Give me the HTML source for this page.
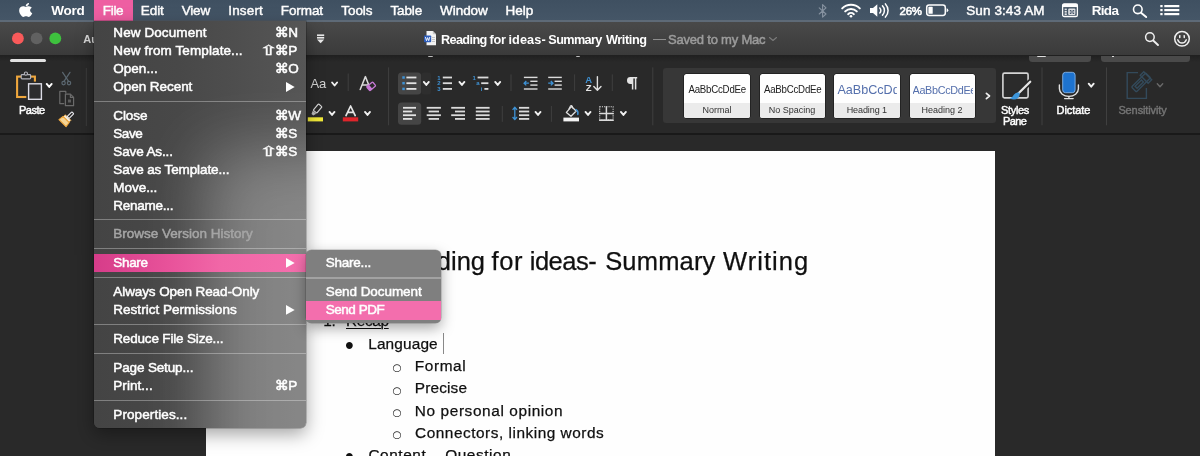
<!DOCTYPE html>
<html lang="en">
<head>
<meta charset="utf-8">
<title>Word - File menu - Share - Send PDF</title>
<style>
html,body{margin:0;padding:0;}
body{width:1200px;height:456px;overflow:hidden;background:#292929;position:relative;font-family:"Liberation Sans","DejaVu Sans",sans-serif;}
.abs,.t,svg{position:absolute;}
.t{white-space:pre;line-height:20px;height:20px;font-family:"Liberation Sans","DejaVu Sans",sans-serif;}
#menubar{left:0;top:0;width:1200px;height:21px;background:linear-gradient(#405162,#465768);}
#mbline{left:0;top:20px;width:1200px;height:1.5px;background:#5f6b78;}
#filehl{left:94px;top:0;width:39px;height:20.5px;background:#ef5fa3;}
#titlebar{left:0;top:21.5px;width:1200px;height:34.2px;background:linear-gradient(#4a4a4a,#3b3b3b);}
#ribbon{left:0;top:55px;width:1200px;height:78px;background:linear-gradient(#202020 0,#2a2a2a 7px,#2a2a2a 100%);}
#ribline{left:0;top:133px;width:1200px;height:1.5px;background:#1a1a1a;}
#page{left:206px;top:150.5px;width:789px;height:306px;background:#fff;}
.vsep{width:1px;background:#4a4a4a;}
.btnbg{background:#3e3e3e;border-radius:4px;}
#gallery{left:662.6px;top:68.3px;width:333.4px;height:54.4px;background:#383838;border-radius:3px;}
.card{top:73.5px;width:65.8px;height:44.3px;background:#fff;border-radius:2.5px;overflow:hidden;box-shadow:0 0 0 0.5px #111;}
.card i{position:absolute;left:0;right:0;top:29px;bottom:0;background:#ececec;}
.card .t{top:5.8px;}
#filemenu{left:94px;top:21px;width:211.6px;height:406.5px;background:linear-gradient(to right,#454545 0%,#494949 40%,#575757 100%);border-radius:0 0 5.5px 5.5px;overflow:hidden;box-shadow:0 6px 18px rgba(0,0,0,0.36),0 0 0 0.5px rgba(0,0,0,0.35);}
#filemenu .glow{left:112px;top:130px;width:400px;height:400px;background:#fff;filter:blur(32px);opacity:0.29;}
.msep{left:94px;width:211.6px;height:1.7px;background:rgba(255,255,255,0.32);}
#sharehl{left:94px;top:253.6px;width:211.6px;height:18.4px;background:linear-gradient(to right,#d73d8a 0%,#e9539b 35%,#f268a8 60%,#f570ae 100%);}
#submenu{left:305.6px;top:250.3px;width:135.1px;height:72.4px;background:#808080;border-radius:5.5px;overflow:hidden;box-shadow:0 5px 14px rgba(0,0,0,0.35),0 0 0 0.5px rgba(0,0,0,0.25);}
#pdfhl{left:305.6px;top:301.3px;width:135.1px;height:18.6px;background:#f46fae;}
.ssep{left:305.6px;top:277.4px;width:135.1px;height:1.5px;background:rgba(255,255,255,0.28);}
</style>
</head>
<body>
<div id="root" style="position:absolute;left:0;top:0;width:1200px;height:456px;overflow:hidden;will-change:transform;opacity:0.999">
<!-- ================= base ================= -->
<div class="abs" id="menubar"></div>
<div class="abs" id="mbline"></div>
<div class="abs" id="filehl"></div>
<div class="abs" id="titlebar"></div>
<div class="abs" id="ribbon"></div>
<div class="abs" id="ribline"></div>
<div class="abs" id="page"></div>

<div class="abs" id="gallery"></div>
<div class="abs card" style="left:684px"><i></i></div>
<div class="abs card" style="left:759.5px"><i></i></div>
<div class="abs card" style="left:834.4px"><i></i><span class="t" style="left:3.10px;top:6.20px;font-size:12.6px;color:#5570ad;letter-spacing:-0.020px;width:59.8px;overflow:hidden;">AaBbCcDdEe</span></div>
<div class="abs card" style="left:909.5px"><i></i><span class="t" style="left:3.00px;top:6.00px;font-size:10.8px;color:#5570ad;letter-spacing:-0.312px;width:60px;overflow:hidden;">AaBbCcDdEe</span></div>
<!-- apple logo -->
<svg style="left:19.2px;top:1.6px" width="13.4" height="15.9" viewBox="0 0 384 512" preserveAspectRatio="none"><path fill="#fff" d="M318.700 268.700c-.2-36.700 16.400-64.400 50-84.800-18.800-26.900-47.200-41.700-84.700-44.600-35.500-2.800-74.300 20.700-88.500 20.700-15 0-49.400-19.700-76.400-19.700C63.300 141.200 4 184.800 4 273.500q0 39.300 14.400 81.200c12.800 36.700 59 126.700 107.200 125.200 25.200-.6 43-17.900 75.800-17.900 31.800 0 48.300 17.900 76.400 17.900 48.600-.7 90.400-82.500 102.600-119.300-65.200-30.700-61.700-90-61.700-91.900zm-56.600-164.200c27.300-32.400 24.800-61.900 24-72.500-24.100 1.400-52 16.400-67.900 34.900-17.500 19.800-27.800 44.300-25.600 71.900 26.100 2 49.900-11.400 69.500-34.300z"/></svg>

<!-- menubar right icons -->
<svg style="left:816px;top:2px" width="14" height="18" viewBox="0 0 14 18"><path d="M3.2 5.800 L10 12 L6.600 15.200 L6.600 2.600 L10 5.800 L3.200 12" fill="none" stroke="#8793a1" stroke-width="1.100" stroke-linejoin="round" stroke-linecap="round"/></svg>
<svg style="left:840px;top:2px" width="22" height="17" viewBox="0 0 22 17"><g fill="none" stroke="#fff" stroke-linecap="round"><path d="M2.200 6.400 A12.500 12.500 0 0 1 19.800 6.400" stroke-width="2"/><path d="M5.200 9.400 A8.300 8.300 0 0 1 16.800 9.400" stroke-width="2"/><path d="M8.100 12.200 A4.200 4.200 0 0 1 13.900 12.200" stroke-width="1.900"/></g><circle cx="11" cy="14.300" r="1.300" fill="#fff"/></svg>
<svg style="left:868px;top:2px" width="24" height="17" viewBox="0 0 24 17"><path d="M2 6.100 H5 L9.300 2.300 V14.700 L5 10.900 H2 Z" fill="#fff"/><g fill="none" stroke="#fff" stroke-width="1.500" stroke-linecap="round"><path d="M11.800 6 A3.500 3.500 0 0 1 11.800 11"/><path d="M14.500 3.900 A6.500 6.500 0 0 1 14.500 13.100"/><path d="M17.400 1.900 A9.500 9.500 0 0 1 17.400 15.100"/></g></svg>
<svg style="left:925px;top:3px" width="26" height="15" viewBox="0 0 26 15"><rect x="1.700" y="2.100" width="18.600" height="10.400" rx="2.400" fill="none" stroke="#fff" stroke-width="1.500"/><rect x="3.400" y="3.800" width="4.300" height="7" rx="0.600" fill="#fff"/><path d="M21.600 5.300 q1.700 0.300 1.700 2 t-1.700 2 Z" fill="#fff"/></svg>
<svg style="left:1061px;top:2px" width="18" height="17" viewBox="0 0 18 17"><rect x="1.600" y="1.900" width="14.800" height="12.600" rx="1.600" fill="none" stroke="#fff" stroke-width="1.300"/><rect x="1.600" y="1.900" width="14.800" height="3.200" fill="#fff"/><g fill="#fff" opacity="0.850"><rect x="3.600" y="6.600" width="2.200" height="1.600"/><rect x="3.600" y="9" width="2.200" height="1.600"/><rect x="3.600" y="11.400" width="2.200" height="1.600"/><rect x="7.200" y="6.600" width="7.200" height="6.400" rx="1"/></g><path d="M8.800 8 h1.600 v1.400 h1.200 v-1.400 h1.600 v1.600 h-1.400 v0.800 h1.400 v1.600 h-1.600 v-1.400 h-1.200 v1.400 h-1.600 v-1.600 h1.400 v-0.800 h-1.400 Z" fill="#46576b"/></svg>
<svg style="left:1131px;top:3px" width="18" height="16" viewBox="0 0 18 16"><circle cx="6.800" cy="6.300" r="4.300" fill="none" stroke="#fff" stroke-width="1.600"/><path d="M10 9.700 L15.200 14.100" stroke="#fff" stroke-width="1.900" stroke-linecap="round"/></svg>
<svg style="left:1159px;top:3px" width="22" height="14" viewBox="0 0 22 14"><g fill="#fff"><rect x="1.300" y="2" width="2.300" height="2.200"/><rect x="5.300" y="2" width="15" height="2.200"/><rect x="1.300" y="6" width="2.300" height="2.200"/><rect x="5.300" y="6" width="15" height="2.200"/><rect x="1.300" y="10" width="2.300" height="2.200"/><rect x="5.300" y="10" width="15" height="2.200"/></g></svg>

<!-- traffic lights -->
<svg style="left:10px;top:30px" width="56" height="17" viewBox="0 0 56 17"><circle cx="7.900" cy="8.400" r="5.900" fill="#fa5b5b"/><circle cx="26.600" cy="8.400" r="5.900" fill="#626262"/><circle cx="45.300" cy="8.400" r="5.900" fill="#3fc23f"/></svg>

<!-- quick access overflow -->
<svg style="left:315px;top:32px" width="11" height="13" viewBox="0 0 11 13"><rect x="2" y="2.400" width="7.200" height="1.700" fill="#ececec"/><rect x="2" y="5" width="7.200" height="1.600" fill="#ececec"/><path d="M2 7.500 h7.200 l-3.600 3.800 Z" fill="#ececec"/></svg>

<!-- title: doc icon, chevron -->
<svg style="left:423px;top:29.500px" width="15" height="17" viewBox="0 0 15 17"><path d="M3.500 1 H9.800 L13 4.200 V15.300 H3.500 Z" fill="#f4f4f4"/><path d="M9.800 1 L13 4.200 H9.800 Z" fill="#c9c9c9"/><rect x="1" y="5.400" width="7.200" height="6.800" rx="0.800" fill="#2f5fbd"/><path d="M2.400 7 L3.500 10.700 L4.600 7.600 L5.700 10.700 L6.800 7" fill="none" stroke="#fff" stroke-width="0.900" stroke-linejoin="round"/><rect x="9" y="7" width="3" height="0.800" fill="#bbb"/><rect x="9" y="9" width="3" height="0.800" fill="#bbb"/><rect x="9" y="11" width="3" height="0.800" fill="#bbb"/></svg>
<svg style="left:768px;top:35px" width="10" height="8" viewBox="0 0 10 8"><path d="M1.500 2.500 L5 5.500 L8.500 2.500" fill="none" stroke="#7c7c7c" stroke-width="1.100" stroke-linecap="round" stroke-linejoin="round"/></svg>

<!-- title right: search, smiley -->
<svg style="left:1143px;top:30px" width="18" height="17" viewBox="0 0 18 17"><circle cx="6.900" cy="7.100" r="4.300" fill="none" stroke="#f0f0f0" stroke-width="1.500"/><path d="M10.200 10.500 L15 15" stroke="#f0f0f0" stroke-width="1.900" stroke-linecap="round"/></svg>
<svg style="left:1172px;top:29px" width="20" height="20" viewBox="0 0 20 20"><circle cx="10" cy="9.800" r="7.300" fill="none" stroke="#f0f0f0" stroke-width="1.500"/><rect x="7" y="5.900" width="1.500" height="3.400" rx="0.700" fill="#f0f0f0"/><rect x="11.500" y="5.900" width="1.500" height="3.400" rx="0.700" fill="#f0f0f0"/><path d="M5.700 10.800 A4.500 4.500 0 0 0 14.300 10.800" fill="none" stroke="#f0f0f0" stroke-width="1.400" stroke-linecap="round"/></svg>

<!-- cropped buttons under title bar -->
<div class="abs" style="left:1029px;top:55.500px;width:62px;height:6px;background:#4b4b4b;border-radius:0 0 3.500px 3.500px"></div>
<div class="abs" style="left:1100.800px;top:55.500px;width:89.600px;height:6px;background:#4b4b4b;border-radius:0 0 3.500px 3.500px"></div>
<div class="abs" style="left:1037px;top:55.500px;width:9px;height:1.400px;background:#ddd;border-radius:0 0 1px 1px"></div>
<div class="abs" style="left:1112px;top:55.500px;width:1.500px;height:1.200px;background:#ddd"></div>
<div class="abs" style="left:428px;top:55.500px;width:5px;height:1.300px;background:#bbb;border-radius:0 0 2px 2px"></div>
<div class="abs" style="left:576px;top:55.500px;width:4px;height:1.300px;background:#bbb;border-radius:0 0 2px 2px"></div>

<!-- tab indicator -->
<div class="abs" style="left:9.600px;top:58.600px;width:36.900px;height:3.500px;background:#e2e2e2;border-radius:2px"></div>

<svg style="left:0;top:0" width="1200" height="456" viewBox="0 0 1200 456">
<rect x="17.1" y="76.6" width="17.8" height="20.4" fill="none" stroke="#f0a83e" stroke-width="2.1"/>
<rect x="21.2" y="74.6" width="9.4" height="4.2" rx="0.8" fill="#2a2a2a" stroke="#b4b4bc" stroke-width="1.2"/>
<circle cx="25.9" cy="73.6" r="1.6" fill="#2a2a2a" stroke="#b4b4bc" stroke-width="1.1"/>
<rect x="26.3" y="81.6" width="17.2" height="19.8" fill="#2a2a2a"/>
<rect x="28.6" y="83.8" width="12.8" height="15.5" fill="#2e2e30" stroke="#dcdce6" stroke-width="1.4"/>
<path d="M46.70 83.90 L49.20 86.90 L51.70 83.90" fill="none" stroke="#ffffff" stroke-width="1.9" stroke-linecap="round" stroke-linejoin="round"/>
<g fill="none" stroke="#5c6871" stroke-width="1.2" stroke-linecap="round"><path d="M62.6 72.3 L68.8 81.6"/><path d="M70 72.300 L63.800 81.600"/><circle cx="63.600" cy="83.100" r="1.700"/><circle cx="69" cy="83.100" r="1.700"/></g>
<g fill="none" stroke="#6c6c6c" stroke-width="1.200" stroke-linejoin="round"><path d="M64.200 103.600 H59.800 V91.400 H65.800 V93.400"/><path d="M65.400 94.200 H70.400 L73.600 97.400 V105.700 H65.400 Z"/><path d="M70.400 94.200 V97.400 H73.600"/></g>
<rect x="68" y="99.500" width="3" height="3" fill="#6c6c6c" opacity="0.8"/>
<g transform="translate(67 118.600) rotate(45) scale(0.86)"><rect x="-4.600" y="-1.800" width="9.200" height="3" fill="#f4efe4" stroke="#f0a83e" stroke-width="0.900"/><path d="M-5 1.400 H5 L5.800 7.400 H-5.800 Z" fill="#f6d596" stroke="#f0a83e" stroke-width="1.300" stroke-linejoin="round"/><rect x="-1.500" y="-9.600" width="3" height="7.800" rx="0.600" fill="#2c2c2c" stroke="#ececf2" stroke-width="1.300"/></g>
<rect x="85.80" y="68" width="1" height="58.00" fill="#404040"/>
<path d="M360.200 89.500 L365.400 76.600 L370.600 89.500 M362 85 H368.800" fill="none" stroke="#dcdcdc" stroke-width="1.500" stroke-linejoin="round" stroke-linecap="round"/>
<g transform="translate(371.200 86.300) rotate(-40)"><rect x="-3.900" y="-2.600" width="7.800" height="5.200" rx="0.900" fill="#2a2a2a" stroke="#c97bd8" stroke-width="1.300"/><rect x="-3.900" y="-2.600" width="3.200" height="5.200" fill="#c97bd8"/></g>
<path d="M332.10 82.50 L334.60 85.50 L337.10 82.50" fill="none" stroke="#f2f2f2" stroke-width="1.9" stroke-linecap="round" stroke-linejoin="round"/>
<rect x="347.70" y="73.5" width="1" height="17.50" fill="#404040"/>
<rect x="307.800" y="117.300" width="15.200" height="4.100" fill="#f2ea3a"/>
<g transform="translate(316 110.400) rotate(40)"><rect x="-2.300" y="-6.600" width="4.600" height="8.200" rx="0.700" fill="none" stroke="#d8d8d8" stroke-width="1.200"/><path d="M-2.300 2.400 H2.300 L1.200 5.600 H-1.200 Z" fill="#bdbdbd"/></g>
<path d="M329.50 111.90 L332.00 114.90 L334.50 111.90" fill="none" stroke="#f2f2f2" stroke-width="1.9" stroke-linecap="round" stroke-linejoin="round"/>
<path d="M346 115.600 L350.600 106 L355.200 115.600 M347.600 112.400 H353.600" fill="none" stroke="#e6e6e6" stroke-width="1.700" stroke-linejoin="round" stroke-linecap="round"/>
<rect x="342.800" y="117.300" width="15.400" height="4.100" fill="#e0262c"/>
<path d="M365.00 111.90 L367.50 114.90 L370.00 111.90" fill="none" stroke="#f2f2f2" stroke-width="1.9" stroke-linecap="round" stroke-linejoin="round"/>
<rect x="388.10" y="67.4" width="1" height="57.90" fill="#414141"/>
<rect x="398" y="72.600" width="23.200" height="22" rx="3.500" fill="#464646"/>
<rect x="421.200" y="72.600" width="10" height="22" rx="3" fill="#2f2f2f"/>
<rect x="402.300" y="76.25" width="2.500" height="2.500" fill="#3f93d6"/>
<rect x="406.40" y="76.60" width="10.00" height="1.8" fill="#e4e4e4"/>
<rect x="402.300" y="81.95" width="2.500" height="2.500" fill="#3f93d6"/>
<rect x="406.40" y="82.30" width="10.00" height="1.8" fill="#e4e4e4"/>
<rect x="402.300" y="87.65" width="2.500" height="2.500" fill="#3f93d6"/>
<rect x="406.40" y="88.00" width="10.00" height="1.8" fill="#e4e4e4"/>
<path d="M423.80 81.90 L426.30 84.90 L428.80 81.90" fill="none" stroke="#f2f2f2" stroke-width="1.9" stroke-linecap="round" stroke-linejoin="round"/>
<text x="437.300" y="79.60" font-family="Liberation Sans, sans-serif" font-size="6" font-weight="bold" fill="#3f93d6">1</text>
<rect x="442.80" y="76.60" width="9.20" height="1.8" fill="#dcdcdc"/>
<text x="437.300" y="85.30" font-family="Liberation Sans, sans-serif" font-size="6" font-weight="bold" fill="#3f93d6">2</text>
<rect x="442.80" y="82.30" width="9.20" height="1.8" fill="#dcdcdc"/>
<text x="437.300" y="91.00" font-family="Liberation Sans, sans-serif" font-size="6" font-weight="bold" fill="#3f93d6">3</text>
<rect x="442.80" y="88.00" width="9.20" height="1.8" fill="#dcdcdc"/>
<path d="M459.40 81.90 L461.90 84.90 L464.40 81.90" fill="none" stroke="#f2f2f2" stroke-width="1.9" stroke-linecap="round" stroke-linejoin="round"/>
<text x="472.400" y="79.600" font-family="Liberation Sans, sans-serif" font-size="6" font-weight="bold" fill="#3f93d6">1</text>
<rect x="477.60" y="76.60" width="10.80" height="1.8" fill="#dcdcdc"/>
<text x="476.200" y="85.200" font-family="Liberation Sans, sans-serif" font-size="6" font-weight="bold" fill="#3f93d6">a</text>
<rect x="481.20" y="82.30" width="7.20" height="1.8" fill="#dcdcdc"/>
<text x="480.800" y="91" font-family="Liberation Sans, sans-serif" font-size="6" font-weight="bold" fill="#3f93d6">i</text>
<rect x="484.40" y="88.00" width="4.00" height="1.8" fill="#dcdcdc"/>
<path d="M495.20 81.90 L497.70 84.90 L500.20 81.90" fill="none" stroke="#f2f2f2" stroke-width="1.9" stroke-linecap="round" stroke-linejoin="round"/>
<rect x="510.50" y="74.4" width="1" height="16.60" fill="#404040"/>
<rect x="523.90" y="76.70" width="13.60" height="1.4" fill="#dcdcdc"/><rect x="530.30" y="80.60" width="7.20" height="1.4" fill="#dcdcdc"/><rect x="530.30" y="84.40" width="7.20" height="1.4" fill="#dcdcdc"/><rect x="523.90" y="88.30" width="13.60" height="1.4" fill="#dcdcdc"/><path d="M528.90 83.200 H524.30 M526.30 81 L524.10 83.200 L526.30 85.400" fill="none" stroke="#3f93d6" stroke-width="1.300"/>
<rect x="548.20" y="76.70" width="13.60" height="1.4" fill="#dcdcdc"/><rect x="554.60" y="80.60" width="7.20" height="1.4" fill="#dcdcdc"/><rect x="554.60" y="84.40" width="7.20" height="1.4" fill="#dcdcdc"/><rect x="548.20" y="88.30" width="13.60" height="1.4" fill="#dcdcdc"/><path d="M548.20 83.200 H552.80 M550.80 81 L553.00 83.200 L550.80 85.400" fill="none" stroke="#3f93d6" stroke-width="1.300"/>
<rect x="574.10" y="74.4" width="1" height="16.60" fill="#404040"/>
<text x="585.300" y="83.200" font-family="Liberation Sans, sans-serif" font-size="9.500" font-weight="bold" fill="#3f93d6">A</text>
<text x="585.700" y="91.300" font-family="Liberation Sans, sans-serif" font-size="9.500" font-weight="bold" fill="#e6e6e6">Z</text>
<path d="M597.400 76.600 V90 M593.800 86.400 L597.400 90.200 L601 86.400" fill="none" stroke="#e2e2e2" stroke-width="1.400" stroke-linecap="round" stroke-linejoin="round"/>
<rect x="611.80" y="74.4" width="1" height="16.60" fill="#404040"/>
<path d="M630 77.800 H637.200 M632.600 77.800 V89.400 M635.600 77.800 V89.400" fill="none" stroke="#e4e4e4" stroke-width="1.500"/><path d="M630.400 77.100 A3.400 3.400 0 0 0 630.400 83.900 H632.600 V77.100 Z" fill="#e4e4e4"/>
<rect x="652.30" y="67.4" width="1" height="57.90" fill="#414141"/>
<rect x="398" y="102.400" width="23.200" height="22.400" rx="3.500" fill="#464646"/>
<rect x="403.00" y="106.90" width="13.00" height="1.8" fill="#e4e4e4"/>
<rect x="403.00" y="110.60" width="9.20" height="1.8" fill="#e4e4e4"/>
<rect x="403.00" y="114.30" width="13.00" height="1.8" fill="#e4e4e4"/>
<rect x="403.00" y="118.00" width="9.20" height="1.8" fill="#e4e4e4"/>
<rect x="426.70" y="106.90" width="14.20" height="1.8" fill="#dcdcdc"/>
<rect x="428.60" y="110.60" width="10.40" height="1.8" fill="#dcdcdc"/>
<rect x="426.70" y="114.30" width="14.20" height="1.8" fill="#dcdcdc"/>
<rect x="428.60" y="118.00" width="10.40" height="1.8" fill="#dcdcdc"/>
<rect x="451.20" y="106.90" width="13.80" height="1.8" fill="#dcdcdc"/>
<rect x="455.00" y="110.60" width="10.00" height="1.8" fill="#dcdcdc"/>
<rect x="451.20" y="114.30" width="13.80" height="1.8" fill="#dcdcdc"/>
<rect x="455.00" y="118.00" width="10.00" height="1.8" fill="#dcdcdc"/>
<rect x="475.80" y="106.90" width="13.80" height="1.8" fill="#dcdcdc"/>
<rect x="475.80" y="110.60" width="13.80" height="1.8" fill="#dcdcdc"/>
<rect x="475.80" y="114.30" width="13.80" height="1.8" fill="#dcdcdc"/>
<rect x="475.80" y="118.00" width="13.80" height="1.8" fill="#dcdcdc"/>
<rect x="501.80" y="106" width="1" height="15.80" fill="#404040"/>
<rect x="519.00" y="106.90" width="10.20" height="1.8" fill="#dcdcdc"/>
<rect x="519.00" y="110.60" width="10.20" height="1.8" fill="#dcdcdc"/>
<rect x="519.00" y="114.30" width="10.20" height="1.8" fill="#dcdcdc"/>
<rect x="519.00" y="118.00" width="10.20" height="1.8" fill="#dcdcdc"/>
<path d="M514.800 107.400 V119.400 M512.600 109.800 L514.800 107.200 L517 109.800 M512.600 117 L514.800 119.600 L517 117" fill="none" stroke="#3f93d6" stroke-width="1.300" stroke-linejoin="round"/>
<path d="M535.50 111.90 L538.00 114.90 L540.50 111.90" fill="none" stroke="#f2f2f2" stroke-width="1.9" stroke-linecap="round" stroke-linejoin="round"/>
<rect x="550.90" y="106" width="1" height="15.80" fill="#404040"/>
<rect x="563.400" y="117.600" width="15.600" height="3.800" fill="#f4f4f4"/>
<path d="M566.400 112.400 L571.400 106.600 L576.200 111 L571 116.200 Z" fill="none" stroke="#e2e2e2" stroke-width="1.300" stroke-linejoin="round"/><path d="M568.800 109.200 L570.400 106 Q571.600 105 572.400 106.600 L572.800 108.400" fill="none" stroke="#e2e2e2" stroke-width="1.100"/>
<path d="M576 109.600 Q578.600 111 577.800 114.400" fill="none" stroke="#3f93d6" stroke-width="1.500" stroke-linecap="round"/>
<path d="M585.50 111.90 L588.00 114.90 L590.50 111.90" fill="none" stroke="#f2f2f2" stroke-width="1.9" stroke-linecap="round" stroke-linejoin="round"/>
<g fill="none" stroke="#dcdcdc"><rect x="599.700" y="106.700" width="13.400" height="13.400" stroke-width="1.100" stroke-dasharray="1.100 1.100"/><path d="M606.400 106.200 V120.600 M599.200 113.400 H613.600" stroke-width="1.500"/><path d="M599.200 120.200 H613.600" stroke-width="1.600"/></g>
<path d="M620.90 111.90 L623.40 114.90 L625.90 111.90" fill="none" stroke="#f2f2f2" stroke-width="1.9" stroke-linecap="round" stroke-linejoin="round"/>
<path d="M986.400 93.400 L989.500 96 L986.400 98.600" fill="none" stroke="#f0f0f0" stroke-width="1.700" stroke-linecap="round" stroke-linejoin="round"/>
<rect x="1002.900" y="73.100" width="25.200" height="24.800" rx="1.600" fill="#2c2c2c" stroke="#d6d6d6" stroke-width="1.600"/>
<path d="M1030.200 81.800 L1016.200 95.600" stroke="#2a2a2a" stroke-width="5.500" stroke-linecap="round"/>
<path d="M1030.200 81.800 L1017.800 94" stroke="#e6e6e6" stroke-width="2.300" stroke-linecap="round"/>
<path d="M1019.400 92.600 Q1016.200 91.800 1014 94.600 Q1012.800 97.400 1009.600 98.400 Q1014.600 100.800 1018 98 Q1020.400 95.600 1019.400 92.600 Z" fill="#3c96dc"/>
<rect x="1041.50" y="67.4" width="1" height="57.90" fill="#414141"/>
<rect x="1062.700" y="72.300" width="12.400" height="20.400" rx="2.800" fill="#1f74d0" stroke="#86b4e6" stroke-width="0.900"/>
<path d="M1059.400 85 V88.800 A9.500 7.600 0 0 0 1078.400 88.800 V85" fill="none" stroke="#e4e4e4" stroke-width="1.400" stroke-linecap="round"/>
<path d="M1068.900 96.400 V98.400 M1064.600 98.600 H1073.200" fill="none" stroke="#e4e4e4" stroke-width="1.300" stroke-linecap="round"/>
<path d="M1088.70 83.70 L1091.20 86.70 L1093.70 83.70" fill="none" stroke="#f2f2f2" stroke-width="1.9" stroke-linecap="round" stroke-linejoin="round"/>
<rect x="1106.00" y="67.4" width="1" height="57.90" fill="#414141"/>
<path d="M1138 72.600 H1127.200 V98.400 H1146.400 V88" fill="none" stroke="#344b5c" stroke-width="1.400"/>
<g transform="translate(1141 82.400) rotate(-45)" fill="none" stroke="#344b5c" stroke-width="1.400"><rect x="-10" y="-3.400" width="20" height="6.800" rx="1"/><rect x="-7" y="-1.400" width="9" height="2.800"/><rect x="4.500" y="-5.600" width="5" height="11.200"/></g>
<path d="M1157.30 83.70 L1160.00 86.70 L1162.70 83.70" fill="none" stroke="#6a6a6a" stroke-width="1.4" stroke-linecap="round" stroke-linejoin="round"/>
</svg>

<span class="t" style="left:51.30px;top:0.60px;font-size:13.5px;color:#fff;font-weight:bold;letter-spacing:-0.262px;">Word</span>
<span class="t" style="left:102.80px;top:0.60px;font-size:13.5px;color:#fff;letter-spacing:-0.316px;-webkit-text-stroke:0.45px;">File</span>
<span class="t" style="left:140.80px;top:0.60px;font-size:13.5px;color:#fff;letter-spacing:-0.091px;-webkit-text-stroke:0.45px;">Edit</span>
<span class="t" style="left:181.70px;top:0.60px;font-size:13.5px;color:#fff;letter-spacing:-0.183px;-webkit-text-stroke:0.45px;">View</span>
<span class="t" style="left:228.30px;top:0.60px;font-size:13.5px;color:#fff;letter-spacing:0.156px;-webkit-text-stroke:0.45px;">Insert</span>
<span class="t" style="left:280.80px;top:0.60px;font-size:13.5px;color:#fff;letter-spacing:-0.094px;-webkit-text-stroke:0.45px;">Format</span>
<span class="t" style="left:341.30px;top:0.60px;font-size:13.5px;color:#fff;letter-spacing:-0.063px;-webkit-text-stroke:0.45px;">Tools</span>
<span class="t" style="left:390.50px;top:0.60px;font-size:13.5px;color:#fff;letter-spacing:-0.156px;-webkit-text-stroke:0.45px;">Table</span>
<span class="t" style="left:440.00px;top:0.60px;font-size:13.5px;color:#fff;letter-spacing:-0.036px;-webkit-text-stroke:0.45px;">Window</span>
<span class="t" style="left:505.50px;top:0.60px;font-size:13.5px;color:#fff;letter-spacing:0.009px;-webkit-text-stroke:0.45px;">Help</span>
<span class="t" style="left:899.50px;top:0.60px;font-size:11.5px;color:#fff;letter-spacing:-0.210px;-webkit-text-stroke:0.6px;">26%</span>
<span class="t" style="left:966.20px;top:0.60px;font-size:13.5px;color:#fff;letter-spacing:0.108px;-webkit-text-stroke:0.45px;">Sun 3:43 AM</span>
<span class="t" style="left:1091.70px;top:0.60px;font-size:13.5px;color:#fff;font-weight:bold;letter-spacing:-0.666px;">Rida</span>
<span class="t" style="left:83.30px;top:29.30px;font-size:11px;color:#ddd;font-weight:bold;">AutoSave</span>
<span class="t" style="left:440.90px;top:29.80px;font-size:12.7px;color:#fff;font-weight:bold;letter-spacing:-0.609px;">Reading</span>
<span class="t" style="left:489.60px;top:29.80px;font-size:12.7px;color:#fff;font-weight:bold;letter-spacing:-0.307px;">for</span>
<span class="t" style="left:508.40px;top:29.80px;font-size:12.7px;color:#fff;font-weight:bold;letter-spacing:0.121px;">ideas-</span>
<span class="t" style="left:548.30px;top:29.80px;font-size:12.7px;color:#fff;font-weight:bold;letter-spacing:-0.633px;">Summary</span>
<span class="t" style="left:606.00px;top:29.80px;font-size:12.7px;color:#fff;font-weight:bold;letter-spacing:-0.410px;">Writing</span>
<span class="t" style="left:653.00px;top:29.30px;font-size:13px;color:#9a9a9a;letter-spacing:-0.700px;">—</span>
<span class="t" style="left:668.00px;top:29.60px;font-size:13px;color:#9c9c9c;letter-spacing:-0.202px;-webkit-text-stroke:0.5px;">Saved to my Mac</span>
<span class="t" style="left:310.50px;top:74.00px;font-size:13px;color:#d4d4d4;letter-spacing:-0.053px;">Aa</span>
<span class="t" style="left:19.00px;top:100.30px;font-size:11px;color:#fff;letter-spacing:-0.508px;-webkit-text-stroke:0.45px;">Paste</span>
<span class="t" style="left:1001.00px;top:100.40px;font-size:11px;color:#fff;letter-spacing:-0.328px;-webkit-text-stroke:0.45px;">Styles</span>
<span class="t" style="left:1003.00px;top:111.30px;font-size:11px;color:#fff;letter-spacing:-0.601px;-webkit-text-stroke:0.45px;">Pane</span>
<span class="t" style="left:1056.50px;top:100.40px;font-size:11px;color:#fff;letter-spacing:-0.050px;-webkit-text-stroke:0.45px;">Dictate</span>
<span class="t" style="left:1118.40px;top:100.40px;font-size:11px;color:#757575;letter-spacing:-0.112px;-webkit-text-stroke:0.45px;">Sensitivity</span>
<span class="t" style="left:688.40px;top:79.50px;font-size:9.7px;color:#222;letter-spacing:-0.218px;transform:scaleY(1.1);">AaBbCcDdEe</span>
<span class="t" style="left:702.60px;top:100.40px;font-size:9px;color:#333;letter-spacing:-0.036px;">Normal</span>
<span class="t" style="left:763.90px;top:79.50px;font-size:9.7px;color:#222;letter-spacing:-0.218px;transform:scaleY(1.1);">AaBbCcDdEe</span>
<span class="t" style="left:768.80px;top:100.40px;font-size:9px;color:#333;letter-spacing:-0.003px;">No Spacing</span>
<span class="t" style="left:846.70px;top:100.40px;font-size:9px;color:#333;letter-spacing:-0.083px;">Heading 1</span>
<span class="t" style="left:921.40px;top:100.40px;font-size:9px;color:#333;letter-spacing:0.006px;">Heading 2</span>
<span class="t" style="left:390.00px;top:250.76px;font-size:25.5px;color:#111;letter-spacing:0.000px;-webkit-text-stroke:0.25px;">Reading</span>
<span class="t" style="left:491.60px;top:250.76px;font-size:25.5px;color:#111;letter-spacing:0.578px;-webkit-text-stroke:0.25px;">for</span>
<span class="t" style="left:529.80px;top:250.76px;font-size:25.5px;color:#111;letter-spacing:-0.526px;-webkit-text-stroke:0.25px;">ideas-</span>
<span class="t" style="left:605.20px;top:250.76px;font-size:25.5px;color:#111;letter-spacing:0.170px;-webkit-text-stroke:0.25px;">Summary</span>
<span class="t" style="left:723.00px;top:250.76px;font-size:25.5px;color:#111;letter-spacing:1.044px;-webkit-text-stroke:0.25px;">Writing</span>
<span class="t" style="left:323.30px;top:310.86px;font-size:15.4px;color:#111;letter-spacing:-0.422px;-webkit-text-stroke:0.25px;">1.</span>
<span class="t" style="left:346.00px;top:310.86px;font-size:15.4px;color:#111;letter-spacing:-0.360px;text-decoration:underline;text-underline-offset:1.5px;text-decoration-thickness:1px;-webkit-text-stroke:0.25px;">Recap</span>
<span class="t" style="left:368.20px;top:334.46px;font-size:15.4px;color:#111;letter-spacing:0.139px;-webkit-text-stroke:0.25px;">Language</span>
<span class="t" style="left:414.80px;top:356.26px;font-size:15.4px;color:#111;letter-spacing:0.585px;-webkit-text-stroke:0.25px;">Formal</span>
<span class="t" style="left:414.80px;top:378.46px;font-size:15.4px;color:#111;letter-spacing:0.139px;-webkit-text-stroke:0.25px;">Precise</span>
<span class="t" style="left:414.80px;top:400.56px;font-size:15.4px;color:#111;letter-spacing:0.605px;-webkit-text-stroke:0.25px;">No personal opinion</span>
<span class="t" style="left:415.00px;top:422.66px;font-size:15.4px;color:#111;letter-spacing:0.523px;-webkit-text-stroke:0.25px;">Connectors, linking words</span>
<span class="t" style="left:368.40px;top:444.86px;font-size:15.4px;color:#111;letter-spacing:0.576px;-webkit-text-stroke:0.25px;">Content – Question</span>
<span class="t" style="left:344.90px;top:335.40px;font-size:25px;color:#111;">•</span>
<span class="t" style="left:344.90px;top:445.80px;font-size:25px;color:#111;">•</span>
<span class="t" style="left:392.60px;top:357.40px;font-size:10.4px;color:#222;font-family:'DejaVu Sans',sans-serif;">○</span>
<span class="t" style="left:392.60px;top:379.60px;font-size:10.4px;color:#222;font-family:'DejaVu Sans',sans-serif;">○</span>
<span class="t" style="left:392.60px;top:401.70px;font-size:10.4px;color:#222;font-family:'DejaVu Sans',sans-serif;">○</span>
<span class="t" style="left:392.60px;top:423.80px;font-size:10.4px;color:#222;font-family:'DejaVu Sans',sans-serif;">○</span>
<div class="abs" style="left:442.600px;top:333.300px;width:1px;height:20.700px;background:#8a8a8a"></div>

<!-- ================= file menu ================= -->
<div class="abs" id="filemenu"><div class="abs glow"></div></div>
<div class="abs msep" style="top:100.6px"></div>
<div class="abs msep" style="top:218.8px"></div>
<div class="abs msep" style="top:247.6px"></div>
<div class="abs msep" style="top:276.8px"></div>
<div class="abs msep" style="top:323.8px"></div>
<div class="abs msep" style="top:352.8px"></div>
<div class="abs msep" style="top:399.8px"></div>
<div class="abs" id="sharehl"></div>
<svg style="left:0;top:0" width="1200" height="456" viewBox="0 0 1200 456"><g fill="#fff"><path d="M286 82.100 V91.900 L294.700 87 Z"/><path d="M286 258 V267.800 L294.700 262.900 Z"/><path d="M286 305 V314.800 L294.700 309.900 Z"/></g></svg>
<span class="t" style="left:113.30px;top:23.30px;font-size:13.5px;color:#fff;letter-spacing:0.092px;-webkit-text-stroke:0.5px;">New Document</span>
<span class="t" style="left:113.30px;top:41.30px;font-size:13.5px;color:#fff;letter-spacing:0.105px;-webkit-text-stroke:0.5px;">New from Template...</span>
<span class="t" style="left:113.30px;top:59.30px;font-size:13.5px;color:#fff;letter-spacing:0.017px;-webkit-text-stroke:0.5px;">Open...</span>
<span class="t" style="left:113.30px;top:77.30px;font-size:13.5px;color:#fff;letter-spacing:-0.051px;-webkit-text-stroke:0.5px;">Open Recent</span>
<span class="t" style="left:113.30px;top:106.20px;font-size:13.5px;color:#fff;letter-spacing:-0.103px;-webkit-text-stroke:0.5px;">Close</span>
<span class="t" style="left:113.30px;top:124.20px;font-size:13.5px;color:#fff;letter-spacing:-0.445px;-webkit-text-stroke:0.5px;">Save</span>
<span class="t" style="left:113.30px;top:142.20px;font-size:13.5px;color:#fff;letter-spacing:-0.130px;-webkit-text-stroke:0.5px;">Save As...</span>
<span class="t" style="left:113.30px;top:159.70px;font-size:13.5px;color:#fff;letter-spacing:-0.123px;-webkit-text-stroke:0.5px;">Save as Template...</span>
<span class="t" style="left:113.30px;top:177.70px;font-size:13.5px;color:#fff;letter-spacing:-0.038px;-webkit-text-stroke:0.5px;">Move...</span>
<span class="t" style="left:113.30px;top:195.70px;font-size:13.5px;color:#fff;letter-spacing:-0.253px;-webkit-text-stroke:0.5px;">Rename...</span>
<span class="t" style="left:113.30px;top:224.00px;font-size:13.5px;color:#a6a6a6;letter-spacing:-0.007px;-webkit-text-stroke:0.5px;">Browse Version History</span>
<span class="t" style="left:113.30px;top:253.20px;font-size:13.5px;color:#fff;letter-spacing:-0.326px;-webkit-text-stroke:0.5px;">Share</span>
<span class="t" style="left:113.30px;top:282.20px;font-size:13.5px;color:#fff;letter-spacing:-0.087px;-webkit-text-stroke:0.5px;">Always Open Read-Only</span>
<span class="t" style="left:113.30px;top:300.20px;font-size:13.5px;color:#fff;letter-spacing:0.018px;-webkit-text-stroke:0.5px;">Restrict Permissions</span>
<span class="t" style="left:113.30px;top:329.20px;font-size:13.5px;color:#fff;letter-spacing:-0.174px;-webkit-text-stroke:0.5px;">Reduce File Size...</span>
<span class="t" style="left:113.30px;top:358.20px;font-size:13.5px;color:#fff;letter-spacing:-0.139px;-webkit-text-stroke:0.5px;">Page Setup...</span>
<span class="t" style="left:113.30px;top:376.20px;font-size:13.5px;color:#fff;letter-spacing:0.048px;-webkit-text-stroke:0.5px;">Print...</span>
<span class="t" style="left:113.30px;top:405.20px;font-size:13.5px;color:#fff;letter-spacing:0.094px;-webkit-text-stroke:0.5px;">Properties...</span>
<span class="t" style="left:274.80px;top:23.10px;font-size:13.8px;color:#fff;-webkit-text-stroke:0.6px;">⌘</span>
<span class="t" style="left:288.30px;top:23.30px;font-size:13.5px;color:#fff;-webkit-text-stroke:0.5px;">N</span>
<span class="t" style="left:274.80px;top:41.10px;font-size:13.8px;color:#fff;-webkit-text-stroke:0.6px;">⌘</span>
<span class="t" style="left:288.30px;top:41.30px;font-size:13.5px;color:#fff;-webkit-text-stroke:0.5px;">P</span>
<span class="t" style="left:262.10px;top:41.10px;font-size:16px;color:#fff;-webkit-text-stroke:0.35px;transform:scale(1.5,0.84);transform-origin:50% 55%;">⇧</span>
<span class="t" style="left:274.80px;top:59.10px;font-size:13.8px;color:#fff;-webkit-text-stroke:0.6px;">⌘</span>
<span class="t" style="left:288.30px;top:59.30px;font-size:13.5px;color:#fff;-webkit-text-stroke:0.5px;">O</span>
<span class="t" style="left:274.80px;top:106.00px;font-size:13.8px;color:#fff;-webkit-text-stroke:0.6px;">⌘</span>
<span class="t" style="left:288.30px;top:106.20px;font-size:13.5px;color:#fff;-webkit-text-stroke:0.5px;">W</span>
<span class="t" style="left:274.80px;top:124.00px;font-size:13.8px;color:#fff;-webkit-text-stroke:0.6px;">⌘</span>
<span class="t" style="left:288.30px;top:124.20px;font-size:13.5px;color:#fff;-webkit-text-stroke:0.5px;">S</span>
<span class="t" style="left:274.80px;top:142.00px;font-size:13.8px;color:#fff;-webkit-text-stroke:0.6px;">⌘</span>
<span class="t" style="left:288.30px;top:142.20px;font-size:13.5px;color:#fff;-webkit-text-stroke:0.5px;">S</span>
<span class="t" style="left:262.10px;top:142.00px;font-size:16px;color:#fff;-webkit-text-stroke:0.35px;transform:scale(1.5,0.84);transform-origin:50% 55%;">⇧</span>
<span class="t" style="left:274.80px;top:376.00px;font-size:13.8px;color:#fff;-webkit-text-stroke:0.6px;">⌘</span>
<span class="t" style="left:288.30px;top:376.20px;font-size:13.5px;color:#fff;-webkit-text-stroke:0.5px;">P</span>

<!-- ================= submenu ================= -->
<div class="abs" id="submenu"></div>
<div class="abs ssep"></div>
<div class="abs" id="pdfhl"></div>
<span class="t" style="left:325.70px;top:253.10px;font-size:13.5px;color:#fff;letter-spacing:-0.248px;-webkit-text-stroke:0.5px;">Share...</span>
<span class="t" style="left:325.70px;top:282.10px;font-size:13.5px;color:#fff;letter-spacing:-0.062px;-webkit-text-stroke:0.5px;">Send Document</span>
<span class="t" style="left:325.70px;top:300.40px;font-size:13.5px;color:#fff;letter-spacing:-0.460px;-webkit-text-stroke:0.5px;">Send PDF</span>
</div>
</body>
</html>
